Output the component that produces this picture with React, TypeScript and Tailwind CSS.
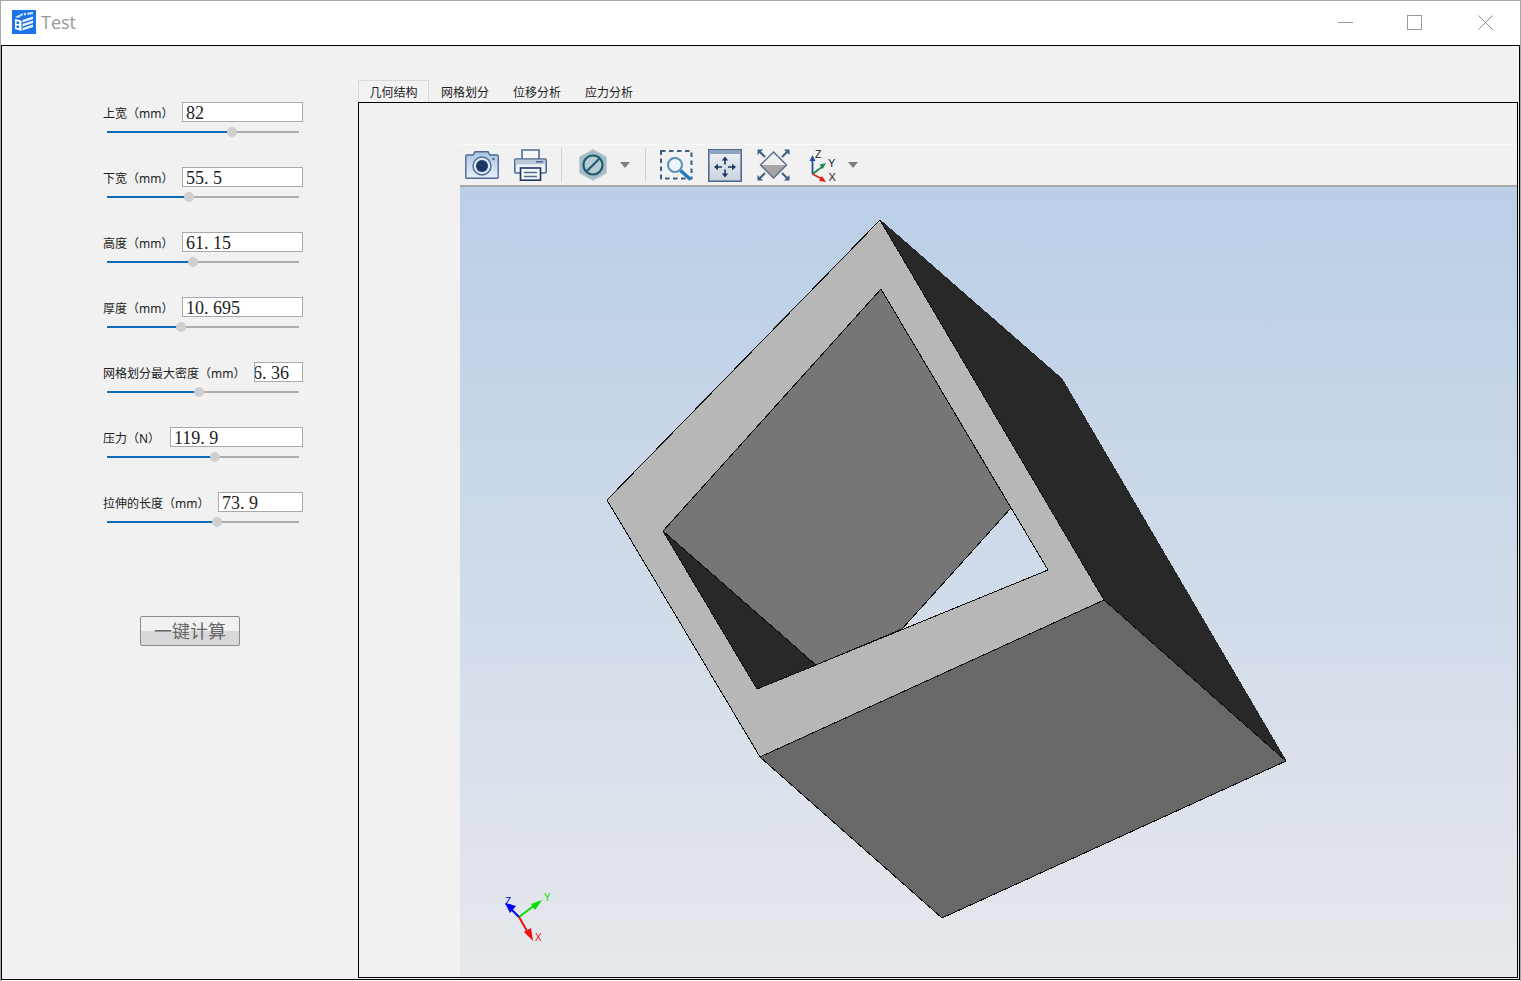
import React from "react";

const rows = [
  { label: "上宽（mm）", value: "82", inputW: "w-[121px]", pct: 65 },
  { label: "下宽（mm）", value: "55. 5", inputW: "w-[121px]", pct: 42.7 },
  { label: "高度（mm）", value: "61. 15", inputW: "w-[121px]", pct: 44.8 },
  { label: "厚度（mm）", value: "10. 695", inputW: "w-[121px]", pct: 38.5 },
  { label: "网格划分最大密度（mm）", value: "6. 36", inputW: "w-[49px]", pct: 47.9, clip: true },
  { label: "压力（N）", value: "119. 9", inputW: "w-[133px]", pct: 56.2 },
  { label: "拉伸的长度（mm）", value: "73. 9", inputW: "w-[85px]", pct: 57.3 },
];

function Row({ r }: { r: (typeof rows)[number] }) {
  return (
    <div className="flex h-[65px] w-[200px] flex-col">
      <div className="flex h-[20px] items-center justify-between">
        <span className="pt-[4px] text-[12px] text-[#222] whitespace-nowrap">{r.label}</span>
        <div className={`${r.inputW} flex h-[20px] items-center overflow-hidden whitespace-nowrap border border-[#a9a9a9] bg-white pl-[3px] pt-[2px] font-['Liberation_Serif',serif] text-[18px] text-[#222]`}>
          <span className={r.clip ? "-ml-[5px] shrink-0" : "shrink-0"}>{r.value}</span>
        </div>
      </div>
      <div className="relative ml-[4px] mt-[9px] h-[2px] w-[192px] bg-[#adadad]">
        <div className="h-[2px] bg-[#0f6cbd]" style={{ width: `${r.pct}%` }} />
        <div
          className="absolute top-[-4px] h-[10px] w-[10px] -translate-x-1/2 rounded-full bg-[#cfcfcf]"
          style={{ left: `${r.pct}%` }}
        />
      </div>
    </div>
  );
}

function AppIcon() {
  return (
    <svg viewBox="0 0 24 24" className="h-[24px] w-[24px]">
      <rect width="24" height="24" fill="#1a73e8" />
      <path d="M3 7 L11 3 L11 5 L6 8 Z" fill="#cfe2fb" />
      <path d="M12 3 L14 2.5 L14 5 L12 5.5 Z M15.5 2.5 L21 2 L21 4 L15.5 5 Z" fill="#cfe2fb" />
      <path d="M3 9 L9.5 10.5 V21 L3 19 Z" fill="#ffffff" />
      <rect x="4.5" y="11.5" width="2.5" height="2.5" fill="#1a73e8" />
      <rect x="4.5" y="15.5" width="2.5" height="2.5" fill="#1a73e8" />
      <path d="M10.5 10 L21 6.5 V9 L10.5 12.5 Z M10.5 14 L21 10.5 V13 L10.5 16.5 Z M10.5 18 L21 14.5 V17 L10.5 20.5 Z" fill="#eaf2fe" />
    </svg>
  );
}

function Toolbar() {
  return (
    <div className="flex h-[43px] w-full items-center border-t border-t-[#fafafa] border-b-2 border-b-[#a9a9a9] bg-[#f1f1f1] pl-[5px]">
      {/* camera */}
      <svg viewBox="0 0 34 28" className="h-[28px] w-[34px]">
        <defs>
          <linearGradient id="cam" x1="0" y1="0" x2="0" y2="1">
            <stop offset="0" stopColor="#a9c4e2" />
            <stop offset="1" stopColor="#e6f0fb" />
          </linearGradient>
        </defs>
        <path d="M1.8 4 H8 L10 0.8 H23 L25 4 H32.2 A1 1 0 0 1 33.2 5 V26.2 A1 1 0 0 1 32.2 27.2 H1.8 A1 1 0 0 1 0.8 26.2 V5 A1 1 0 0 1 1.8 4 Z" fill="url(#cam)" stroke="#4f6b92" strokeWidth="1.4" />
        <circle cx="17" cy="15" r="9" fill="#dbe6f2" stroke="#4f6b92" strokeWidth="1.4" />
        <circle cx="17" cy="15" r="6" fill="#1c3768" />
        <circle cx="28.5" cy="8" r="1.3" fill="#4f6b92" />
      </svg>
      {/* printer */}
      <svg viewBox="0 0 33 32" className="ml-[15px] h-[32px] w-[33px]">
        <path d="M8 10 V1 H25 V10" fill="#f4f6f8" stroke="#4f6b92" strokeWidth="1.6" />
        <rect x="0.8" y="10" width="31.4" height="14" rx="1" fill="#eef1f5" stroke="#4f6b92" strokeWidth="1.6" />
        <rect x="1.6" y="10.8" width="29.8" height="4.5" fill="#b9c8da" />
        <rect x="22" y="12" width="7" height="1.6" fill="#4f6b92" />
        <rect x="6.5" y="19" width="20" height="12.2" fill="#f4f6f8" stroke="#1c3768" strokeWidth="1.6" />
        <path d="M10 23.5 H23 M10 27.5 H23" stroke="#4f6b92" strokeWidth="1.5" />
      </svg>
      <div className="ml-[14px] h-[34px] w-px bg-[#d2d2d2]" />
      {/* hex forbid */}
      <svg viewBox="0 0 28 32" className="ml-[17px] h-[32px] w-[28px]">
        <path d="M14 0.5 L27.5 8 V24 L14 31.5 L0.5 24 V8 Z" fill="#a3bcc5" stroke="#bfced4" strokeWidth="1" />
        <circle cx="14" cy="16" r="9.5" fill="#b7cbd2" stroke="#1f5a70" strokeWidth="2.2" />
        <path d="M7.5 22.5 L20.5 9.5" stroke="#1f5a70" strokeWidth="2.2" />
      </svg>
      <svg viewBox="0 0 10 6" className="ml-[13px] h-[6px] w-[10px]"><path d="M0 0 H10 L5 6 Z" fill="#7d7d7d" /></svg>
      <div className="ml-[15px] h-[34px] w-px bg-[#d2d2d2]" />
      {/* zoom box */}
      <svg viewBox="0 0 33 31" className="ml-[14px] h-[31px] w-[33px]">
        <rect x="1" y="1" width="30.5" height="27.5" fill="none" stroke="#3f5c82" strokeWidth="2" strokeDasharray="4.5 3.5" />
        <circle cx="15" cy="15" r="7" fill="#eef4fa" stroke="#5a8fb8" strokeWidth="2" />
        <path d="M20.5 20.5 L30.5 29.5" stroke="#1e78c0" strokeWidth="3.4" />
      </svg>
      {/* pan window */}
      <svg viewBox="0 0 34 33" className="ml-[15px] h-[33px] w-[34px]">
        <defs>
          <linearGradient id="pan" x1="0" y1="0" x2="0" y2="1">
            <stop offset="0" stopColor="#f0f2f5" />
            <stop offset="1" stopColor="#c9d2de" />
          </linearGradient>
        </defs>
        <rect x="0.8" y="0.8" width="32.4" height="31.4" fill="url(#pan)" stroke="#4f6b92" strokeWidth="1.6" />
        <rect x="1.6" y="1.6" width="30.8" height="3.4" fill="#8ea4c0" />
        <path d="M17 10 V15.5 M17 20.5 V26 M8 18 H14 M20 18 H26" stroke="#1c3768" strokeWidth="1.6" />
        <path d="M17 7.5 L13.8 11.5 H20.2 Z M17 28.5 L13.8 24.5 H20.2 Z M6 18 L10 14.8 V21.2 Z M28 18 L24 14.8 V21.2 Z" fill="#1c3768" />
      </svg>
      {/* fit */}
      <svg viewBox="0 0 33 32" className="ml-[15px] h-[32px] w-[33px]">
        <path d="M16.5 3 L29.5 16 H3.5 Z" fill="#eeeeee" />
        <path d="M3.5 16 H29.5 L16.5 29 Z" fill="#a6a6a6" />
        <path d="M16.5 3 L29.5 16 L16.5 29 L3.5 16 Z" fill="none" stroke="#5a6f8e" strokeWidth="1.5" />
        <path d="M3 3 L8 8 M30 3 L25 8 M3 29 L8 24 M30 29 L25 24" stroke="#3f5c82" strokeWidth="2" />
        <path d="M0.5 0.5 H6 L0.5 6 Z M32.5 0.5 H27 L32.5 6 Z M0.5 31.5 H6 L0.5 26 Z M32.5 31.5 H27 L32.5 26 Z" fill="#3f5c82" />
      </svg>
      {/* axes */}
      <svg viewBox="0 0 30 33" className="ml-[19px] h-[33px] w-[30px]">
        <path d="M3.5 25 V11" stroke="#1f4fa8" strokeWidth="1.8" />
        <path d="M3.5 6 L0.5 12 H6.5 Z" fill="#1f4fa8" />
        <path d="M3.5 25 L13 18" stroke="#1f8a4c" strokeWidth="1.8" />
        <path d="M17 14 L10.5 15.5 L13.8 20 Z" fill="#1f8a4c" />
        <path d="M3.5 25 L13 30" stroke="#e02020" strokeWidth="1.8" />
        <path d="M17 33 L13 27 L10 32 Z" fill="#e02020" />
        <text x="6" y="9" fontSize="10.5" fontFamily="Liberation Sans" fill="#222">Z</text>
        <text x="19" y="18" fontSize="11" fontFamily="Liberation Sans" fill="#222">Y</text>
        <text x="19.5" y="32" fontSize="11" fontFamily="Liberation Sans" fill="#222">X</text>
      </svg>
      <svg viewBox="0 0 10 6" className="ml-[9px] h-[6px] w-[10px]"><path d="M0 0 H10 L5 6 Z" fill="#7d7d7d" /></svg>
    </div>
  );
}

function Scene() {
  return (
    <svg viewBox="460 187 1057 790" className="block h-full w-full" preserveAspectRatio="none">
      <defs>
        <linearGradient id="bg" x1="0" y1="0" x2="0" y2="1">
          <stop offset="0" stopColor="#bacee6" />
          <stop offset="1" stopColor="#e6e8ec" />
        </linearGradient>
      </defs>
      <rect x="460" y="187" width="1057" height="790" fill="url(#bg)" />
      <g shapeRendering="crispEdges" stroke="#111" strokeWidth="1">
        {/* right outer side */}
        <path d="M880 220 L1062 379 L1286 761 L1104 600 Z" fill="#282828" stroke="#282828" />
        {/* bottom outer side */}
        <path d="M760 757 L1104 600 L1286 761 L942 918 Z" fill="#686868" />
        {/* front ring */}
        <path fillRule="evenodd" d="M880 220 L1104 600 L760 757 L607 500 Z M881 289 L663 531 L757 689 L1048 570 Z" fill="#b7b7b7" />
        {/* inner back wall */}
        <path d="M881 289 L1011 508 L902 629 L816 665 L663 531 Z" fill="#767676" />
        {/* inner dark */}
        <path d="M663 531 L816 665 L757 689 Z" fill="#282828" />
      </g>
      {/* mini axes */}
      <g>
        <path d="M519 917 L535 905" stroke="#00e000" strokeWidth="2" />
        <path d="M542 900 L531 904 L535 910 Z" fill="#00e000" />
        <path d="M519 917 L511 909" stroke="#0000f0" strokeWidth="2" />
        <path d="M505 903 L516 906 L510 913 Z" fill="#0000f0" />
        <path d="M519 917 L527 931" stroke="#f01010" strokeWidth="2" />
        <path d="M533 941 L524 932 L531 928 Z" fill="#f01010" />
        <text x="505" y="905" fontSize="10" fontFamily="Liberation Sans" fill="#0000f0">Z</text>
        <text x="544" y="901" fontSize="10" fontFamily="Liberation Sans" fill="#00e000">Y</text>
        <text x="535" y="941" fontSize="10" fontFamily="Liberation Sans" fill="#f01010">X</text>
      </g>
    </svg>
  );
}

export default function App() {
  return (
    <div className="relative h-[981px] w-[1521px] overflow-hidden border-l border-r border-t border-[#a8a8a8] bg-white font-['Noto_Sans','Noto_Sans_CJK_SC',sans-serif]">
      {/* title bar */}
      <div className="flex h-[44px] items-center pb-[2px] pl-[11px]">
        <AppIcon />
        <span className="ml-[5px] font-['Open_Sans',sans-serif] text-[18px] text-[#999]">Test</span>
        <div className="ml-auto flex items-center pr-[27px]">
          <div className="h-px w-[15px] bg-[#9a9a9a]" />
          <div className="ml-[54px] h-[15px] w-[15px] border border-[#9a9a9a]" />
          <svg viewBox="0 0 15 15" className="ml-[56px] h-[15px] w-[15px]">
            <path d="M0.5 0.5 L14.5 14.5 M14.5 0.5 L0.5 14.5" stroke="#8f8f8f" strokeWidth="1" />
          </svg>
        </div>
      </div>
      {/* client */}
      <div className="flex h-[935px] border border-black bg-[#f1f1f1]">
        <aside className="w-[356px] shrink-0 pl-[101px] pt-[56px]">
          {rows.map((r) => (
            <Row key={r.label} r={r} />
          ))}
          <button className="ml-[37px] mt-[59px] flex h-[30px] w-[100px] items-center justify-center rounded-[2px] border border-[#8a8a8a] bg-[linear-gradient(#f1f1f1_50%,#d8d8d8_50%)] text-[18px] text-[#666]">
            一键计算
          </button>
        </aside>
        <main className="mb-px mr-px flex min-w-0 flex-1 flex-col pt-[34px]">
          <div className="flex h-[23px] items-end text-[12px] text-[#222]">
            <div className="flex h-[23px] w-[71px] items-center justify-center border border-b-0 border-[#d9d9d9] bg-[#f2f2f2] pt-[2px]">几何结构</div>
            <div className="flex h-[22px] w-[72px] items-center justify-center pt-[1px]">网格划分</div>
            <div className="flex h-[22px] w-[72px] items-center justify-center pt-[1px]">位移分析</div>
            <div className="flex h-[22px] w-[72px] items-center justify-center pt-[1px]">应力分析</div>
          </div>
          <div className="relative -mt-px flex min-h-0 flex-1 flex-col border border-black bg-[#f1f1f1]">
            <div className="ml-[101px] mt-[41px] flex min-h-0 flex-1 flex-col">
              <Toolbar />
              <div className="min-h-0 flex-1"><Scene /></div>
            </div>
          </div>
        </main>
      </div>
    </div>
  );
}
